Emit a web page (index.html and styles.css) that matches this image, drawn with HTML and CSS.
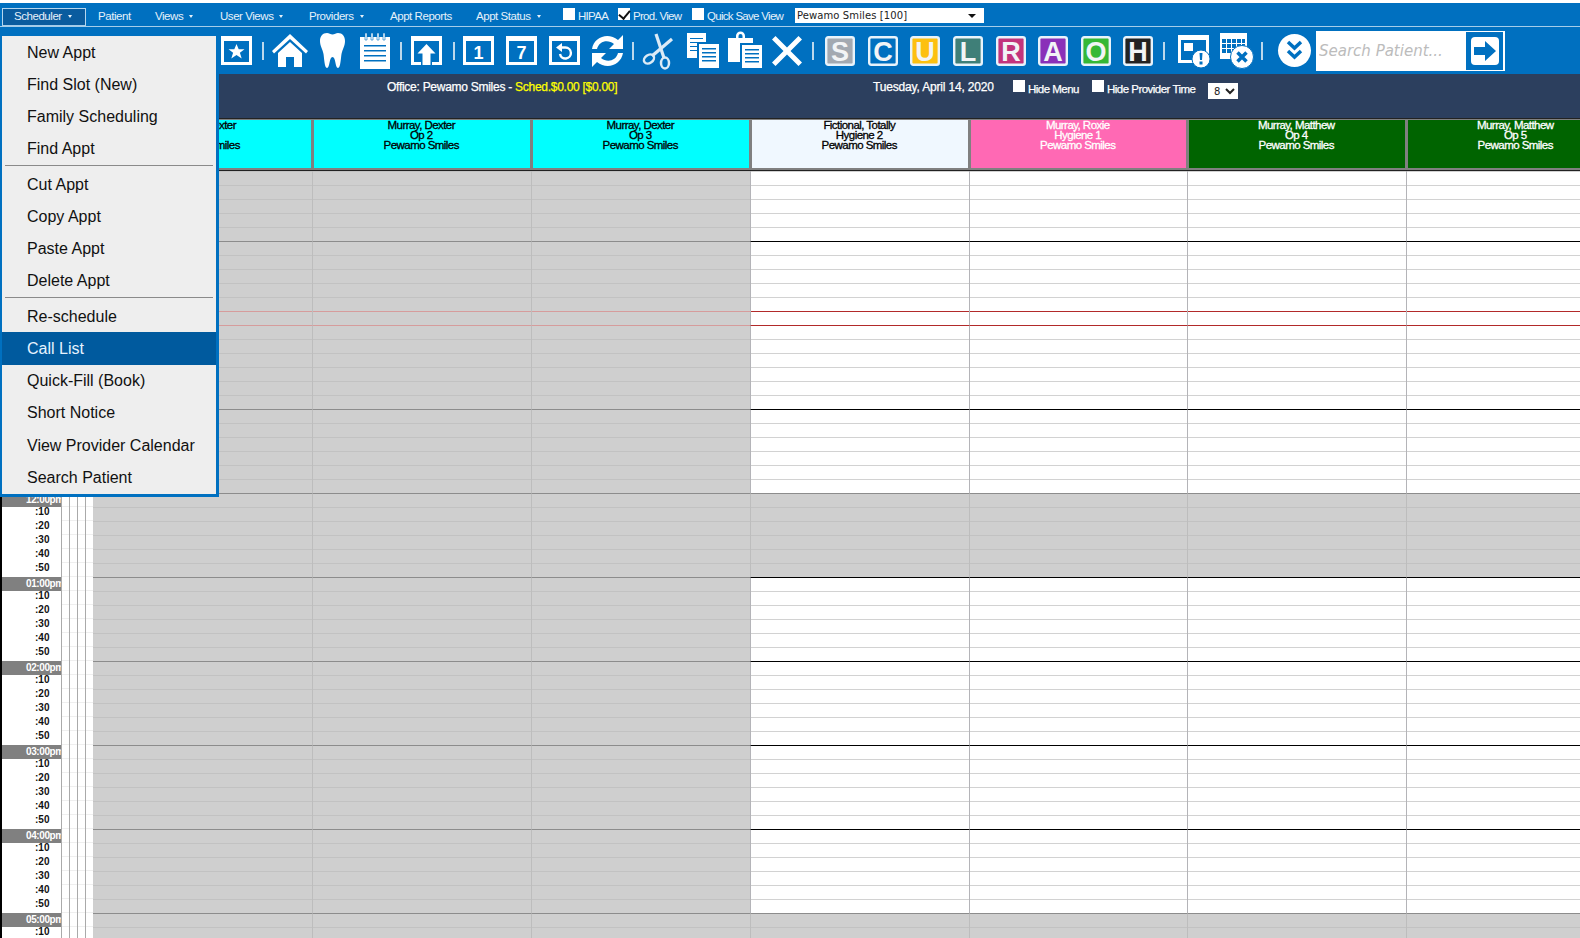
FILE: index.html
```html
<!DOCTYPE html>
<html lang="en">
<head>
<meta charset="utf-8">
<title>Scheduler</title>
<link rel="stylesheet" href="styles.css">
</head>
<body>
<div class="page">
  <nav class="nav">
    <a class="nav-item active caret">Scheduler</a>
    <a class="nav-item">Patient</a>
    <a class="nav-item caret">Views</a>
    <a class="nav-item caret">User Views</a>
    <a class="nav-item caret">Providers</a>
    <a class="nav-item">Appt Reports</a>
    <a class="nav-item caret">Appt Status</a>
    <label class="nav-check"><input type="checkbox">HIPAA</label>
    <label class="nav-check"><input type="checkbox" checked>Prod. View</label>
    <label class="nav-check"><input type="checkbox">Quick Save View</label>
    <span class="office-select"><select><option>Pewamo Smiles [100]</option></select></span>
  </nav>

  <div class="toolbar">
    <svg class="ic" width="31" height="29" viewBox="0 0 31 29"><path fill-rule="evenodd" d="M0 0h31v29H0zM3 5v21h25V5z"/><path d="M15.500 8l2.200 5.200h5.800l-4.600 3.600 1.800 5.700-5.200-3.500-5.200 3.500 1.800-5.700-4.600-3.600h5.800z"/></svg>
    <i class="sep"></i>
    <svg class="ic" width="36" height="33" viewBox="0 0 36 33"><path d="M18 0L36 17l-2 2.500L18 5 2 19.500 0 17z"/><path d="M18 8l12 11v14H22V23h-8v10H6V19z"/></svg>
    <svg class="ic" width="25" height="35" viewBox="0 0 25 35"><path d="M7 0c2 0 3.500 1.500 5.500 1.500S16 0 18 0c4.500 0 7 3.500 7 8 0 5-2.500 8-3.500 13-.7 4-1 14-3.500 14-3 0-2-11-5.500-11S10 35 7 35c-2.500 0-2.800-10-3.500-14C2.500 16 0 13 0 8c0-4.500 2.500-8 7-8z"/></svg>
    <svg class="ic" width="30" height="36" viewBox="0 0 30 36"><path fill-rule="evenodd" d="M0 4h30v32H0zM4 12v1.500h22V12zM4 17v1.500h22V17zM4 22v1.500h22V22zM4 27v1.500h22V27z"/><path d="M5 0h2v7H5zM11 0h2v7h-2zM17 0h2v7h-2zM23 0h2v7h-2z" stroke="#0070c0" stroke-width=".6"/></svg>
    <i class="sep"></i>
    <svg class="ic" width="31" height="29" viewBox="0 0 31 29"><path d="M0 0h31v29H21v-3h7V5H3v21h7v3H0z"/><path d="M15.500 8l9 9.500h-5V29h-8V17.500h-5z"/></svg>
    <i class="sep"></i>
    <svg class="ic" width="31" height="29" viewBox="0 0 31 29"><path fill-rule="evenodd" d="M0 0h31v29H0zM3 5v21h25V5z"/><text class="box-num" x="15.500" y="22.500">1</text></svg>
    <svg class="ic" width="31" height="29" viewBox="0 0 31 29"><path fill-rule="evenodd" d="M0 0h31v29H0zM3 5v21h25V5z"/><text class="box-num" x="15.500" y="22.500">7</text></svg>
    <svg class="ic" width="31" height="29" viewBox="0 0 31 29"><path fill-rule="evenodd" d="M0 0h31v29H0zM3 5v21h25V5z"/><path class="thin" d="M11 11.500h5.500a5.500 5.500 0 1 1-5.500 6.500" stroke-width="2.400"/><path d="M13 7v9l-6-4.500z"/></svg>
    <svg class="ic" width="31" height="34" viewBox="0 0 31 34"><path d="M31 1V15H17l5-5C16 5 7 7 5 15H0C2 3 16-2 26 6z"/><path d="M31 1V15H17l5-5C16 5 7 7 5 15H0C2 3 16-2 26 6z" transform="rotate(180 15.500 17)"/></svg>
    <i class="sep"></i>
    <svg class="ic" width="30" height="36" viewBox="0 0 30 36"><g class="soft"><path d="M13 1l8 24" stroke-width="3.200"/><path d="M29 6L9 23" stroke-width="3.200"/><ellipse cx="22" cy="30" rx="4" ry="5.500"/><ellipse cx="6" cy="26" rx="5.500" ry="4" transform="rotate(-35 6 26)"/></g></svg>
    <svg class="ic" width="32" height="35" viewBox="0 0 32 35"><path fill-rule="evenodd" d="M0 0h19v25H0zM3 5v1h13V5zM3 9v1h13V9zM3 13v1h13v-1zM3 17v1h13v-1z"/><rect x="10" y="9" width="22" height="26" fill="#0070c0"/><path fill-rule="evenodd" d="M12 11h20v24H12zM15 15v1.500h14V15zM15 19v1.500h14V19zM15 23v1.500h14V23zM15 27v1.500h14V27z"/></svg>
    <svg class="ic" width="34" height="35" viewBox="0 0 34 35"><path fill-rule="evenodd" d="M0 5h8V3a4 4 0 0 1 9 0v2h8v24H0zM10.500 3v2h4V3a2 2 0 0 0-4 0z"/><rect x="12" y="10" width="22" height="25" fill="#0070c0"/><path fill-rule="evenodd" d="M14 12h20v23H14zM17 16v1.500h14V16zM17 20v1.500h14V20zM17 24v1.500h14V24zM17 28v1.500h14V28z"/></svg>
    <svg class="ic" width="30" height="30" viewBox="0 0 30 30"><path d="M3.500 0L15 11.500 26.500 0 30 3.500 18.500 15 30 26.500 26.500 30 15 18.500 3.500 30 0 26.500 11.500 15 0 3.500z"/></svg>
    <i class="sep"></i>
    <svg class="letter" width="30" height="30" viewBox="0 0 30 30"><rect class="grey" x="1.200" y="1.200" width="27.600" height="27.600" rx="2"/><text x="15" y="24.500">S</text></svg>
    <svg class="letter" width="30" height="30" viewBox="0 0 30 30"><rect class="blue" x="1.200" y="1.200" width="27.600" height="27.600" rx="2"/><text x="15" y="24.500">C</text></svg>
    <svg class="letter" width="30" height="30" viewBox="0 0 30 30"><rect class="yellow" x="1.200" y="1.200" width="27.600" height="27.600" rx="2"/><text x="15" y="24.500">U</text></svg>
    <svg class="letter" width="30" height="30" viewBox="0 0 30 30"><rect class="teal" x="1.200" y="1.200" width="27.600" height="27.600" rx="2"/><text x="15" y="24.500">L</text></svg>
    <svg class="letter" width="30" height="30" viewBox="0 0 30 30"><rect class="rose" x="1.200" y="1.200" width="27.600" height="27.600" rx="2"/><text x="15" y="24.500">R</text></svg>
    <svg class="letter" width="30" height="30" viewBox="0 0 30 30"><rect class="violet" x="1.200" y="1.200" width="27.600" height="27.600" rx="2"/><text x="15" y="24.500">A</text></svg>
    <svg class="letter" width="30" height="30" viewBox="0 0 30 30"><rect class="green" x="1.200" y="1.200" width="27.600" height="27.600" rx="2"/><text x="15" y="24.500">O</text></svg>
    <svg class="letter" width="30" height="30" viewBox="0 0 30 30"><rect class="black" x="1.200" y="1.200" width="27.600" height="27.600" rx="2"/><text x="15" y="24.500">H</text></svg>
    <i class="sep"></i>
    <svg class="ic" width="32" height="34" viewBox="0 0 32 34"><path fill-rule="evenodd" d="M0 1h31v28H0zM3 6v20h25V6z"/><path d="M6 9h9v8H6z"/><circle cx="23" cy="25" r="9" stroke="#0070c0"/><path class="hole" d="M21.500 19h3l-.5 7h-2zM21.500 27.500h3v3h-3z"/></svg>
    <svg class="ic" width="34" height="36" viewBox="0 0 34 36"><path fill-rule="evenodd" d="M0 0h27v26H0zM2 6v4h4V6zM7 6v4h4V6zM12 6v4h4V6zM17 6v4h4V6zM22 6v4h3V6zM2 11v4h4v-4zM7 11v4h4v-4zM12 11v4h4v-4zM17 11v4h4v-4zM22 11v4h3v-4zM2 16v4h4v-4zM7 16v4h4v-4zM12 16v4h4v-4zM17 16v4h4v-4zM22 16v4h3v-4z"/><circle cx="22" cy="24" r="11.500" stroke="#0070c0"/><path class="hole-line" d="M17.500 19.500l9 9M26.500 19.500l-9 9"/></svg>
    <i class="sep"></i>
    <svg class="ic" width="33" height="33" viewBox="0 0 33 33"><circle cx="16.500" cy="16.500" r="16.500"/><path class="hole-line" d="M10 8l6.500 6L23 8M10 17l6.500 6 6.500-6"/></svg>
    <div class="search">
      <input type="text" placeholder="Search Patient...">
      <button type="button" aria-label="Go"><svg width="28" height="28" viewBox="0 0 28 28"><path d="M3 10h11V4l11 10-11 10v-6H3z"/></svg></button>
    </div>
  </div>

  <div class="status">
    <span class="office">Office: Pewamo Smiles - <em>Sched.$0.00 [$0.00]</em></span>
    <span class="date">Tuesday, April 14, 2020</span>
    <label class="status-check"><input type="checkbox">Hide Menu</label>
    <label class="status-check"><input type="checkbox">Hide Provider Time</label>
    <select class="hours"><option>8</option></select>
  </div>

  <div class="providers">
    <div class="spacer"></div>
    <div class="prov cyan">Murray, Dexter<br>Op 1<br>Pewamo Smiles</div>
    <div class="prov cyan">Murray, Dexter<br>Op 2<br>Pewamo Smiles</div>
    <div class="prov cyan">Murray, Dexter<br>Op 3<br>Pewamo Smiles</div>
    <div class="prov alice">Fictional, Totally<br>Hygiene 2<br>Pewamo Smiles</div>
    <div class="prov pink">Murray, Roxie<br>Hygiene 1<br>Pewamo Smiles</div>
    <div class="prov forest">Murray, Matthew<br>Op 4<br>Pewamo Smiles</div>
    <div class="prov forest">Murray, Matthew<br>Op 5<br>Pewamo Smiles</div>
  </div>

  <div class="grid">
    <div class="hour first">
      <div class="time"></div>
      <i class="n"></i><i class="n"></i><i class="n"></i><i class="n"></i>
      <div class="cell c"></div><div class="cell c"></div><div class="cell c"></div><div class="cell o"></div><div class="cell o"></div><div class="cell o"></div><div class="cell o"></div>
    </div>
    <div class="hour">
      <div class="time"></div>
      <i class="n"></i><i class="n"></i><i class="n"></i><i class="n"></i>
      <div class="cell c"></div><div class="cell c"></div><div class="cell c"></div><div class="cell o"></div><div class="cell o"></div><div class="cell o"></div><div class="cell o"></div>
    </div>
    <div class="hour now">
      <div class="time"></div>
      <i class="n"></i><i class="n"></i><i class="n"></i><i class="n"></i>
      <div class="cell c"></div><div class="cell c"></div><div class="cell c"></div><div class="cell o"></div><div class="cell o"></div><div class="cell o"></div><div class="cell o"></div>
    </div>
    <div class="hour">
      <div class="time"></div>
      <i class="n"></i><i class="n"></i><i class="n"></i><i class="n"></i>
      <div class="cell c"></div><div class="cell c"></div><div class="cell c"></div><div class="cell o"></div><div class="cell o"></div><div class="cell o"></div><div class="cell o"></div>
    </div>
    <div class="hour">
      <div class="time"><b>12:00pm</b><span>:10</span><span>:20</span><span>:30</span><span>:40</span><span>:50</span></div>
      <i class="n"></i><i class="n"></i><i class="n"></i><i class="n"></i>
      <div class="cell c"></div><div class="cell c"></div><div class="cell c"></div><div class="cell c"></div><div class="cell c"></div><div class="cell c"></div><div class="cell c"></div>
    </div>
    <div class="hour">
      <div class="time"><b>01:00pm</b><span>:10</span><span>:20</span><span>:30</span><span>:40</span><span>:50</span></div>
      <i class="n"></i><i class="n"></i><i class="n"></i><i class="n"></i>
      <div class="cell c"></div><div class="cell c"></div><div class="cell c"></div><div class="cell o"></div><div class="cell o"></div><div class="cell o"></div><div class="cell o"></div>
    </div>
    <div class="hour">
      <div class="time"><b>02:00pm</b><span>:10</span><span>:20</span><span>:30</span><span>:40</span><span>:50</span></div>
      <i class="n"></i><i class="n"></i><i class="n"></i><i class="n"></i>
      <div class="cell c"></div><div class="cell c"></div><div class="cell c"></div><div class="cell o"></div><div class="cell o"></div><div class="cell o"></div><div class="cell o"></div>
    </div>
    <div class="hour">
      <div class="time"><b>03:00pm</b><span>:10</span><span>:20</span><span>:30</span><span>:40</span><span>:50</span></div>
      <i class="n"></i><i class="n"></i><i class="n"></i><i class="n"></i>
      <div class="cell c"></div><div class="cell c"></div><div class="cell c"></div><div class="cell o"></div><div class="cell o"></div><div class="cell o"></div><div class="cell o"></div>
    </div>
    <div class="hour">
      <div class="time"><b>04:00pm</b><span>:10</span><span>:20</span><span>:30</span><span>:40</span><span>:50</span></div>
      <i class="n"></i><i class="n"></i><i class="n"></i><i class="n"></i>
      <div class="cell c"></div><div class="cell c"></div><div class="cell c"></div><div class="cell o"></div><div class="cell o"></div><div class="cell o"></div><div class="cell o"></div>
    </div>
    <div class="hour">
      <div class="time"><b>05:00pm</b><span>:10</span></div>
      <i class="n"></i><i class="n"></i><i class="n"></i><i class="n"></i>
      <div class="cell c"></div><div class="cell c"></div><div class="cell c"></div><div class="cell c"></div><div class="cell c"></div><div class="cell c"></div><div class="cell c"></div>
    </div>
  </div>

  <ul class="menu">
    <li>New Appt</li>
    <li>Find Slot (New)</li>
    <li>Family Scheduling</li>
    <li>Find Appt</li>
    <li class="rule"></li>
    <li>Cut Appt</li>
    <li>Copy Appt</li>
    <li>Paste Appt</li>
    <li>Delete Appt</li>
    <li class="rule"></li>
    <li>Re-schedule</li>
    <li class="hot">Call List</li>
    <li>Quick-Fill (Book)</li>
    <li>Short Notice</li>
    <li>View Provider Calendar</li>
    <li>Search Patient</li>
  </ul>
</div>
</body>
</html>
```

FILE: styles.css
```css
* { box-sizing: border-box; }
html, body { margin: 0; padding: 0; background: #fff; }
body { font-family: "Liberation Sans", Arial, sans-serif; }

.page {
  position: relative;
  width: 1580px;
  height: 938px;
  padding-top: 3px;
  overflow: hidden;
  background: #fff;
}

/* top navigation */
.nav {
  display: grid;
  grid-template-columns: 96px 57px 65px 89px 81px 86px 87px 55px 74px 103px 189px;
  align-items: center;
  height: 24px;
  padding: 2px 0 0 2px;
  background: #0070c0;
  border-bottom: 1px solid #a5cdea;
  font-size: 11.5px;
  letter-spacing: -.45px;
  color: #e6f1fa;
}
.nav-item { white-space: nowrap; }
.nav-item.caret::after {
  content: "";
  display: inline-block;
  margin-left: 6px;
  vertical-align: 2px;
  border-style: solid;
  border-width: 3px 2px 0;
  border-color: #e6f1fa transparent transparent;
}
.nav-item.active {
  align-self: end;
  width: 84px;
  height: 18px;
  padding-left: 11px;
  line-height: 14px;
  background: #0a5c9f;
  border: 1px solid #b5d6ee;
  border-bottom-color: #a5cdea;
}
.nav-check { display: flex; align-items: center; gap: 3px; white-space: nowrap; letter-spacing: -.7px; }
.nav-check input, .status-check input {
  appearance: none;
  flex: none;
  position: relative;
  width: 12px;
  height: 12px;
  margin: 0;
  background: #fff;
}
.nav-check input { top: -2px; }
.nav-check input:checked::after {
  content: "";
  position: absolute;
  left: 3px;
  top: 0;
  width: 5px;
  height: 9px;
  border: solid #111;
  border-width: 0 2px 2px 0;
  transform: rotate(40deg);
}
.office-select { position: relative; display: block; height: 15px; }
.office-select select {
  appearance: none;
  display: block;
  width: 189px;
  height: 15px;
  padding: 0 0 0 2px;
  border: 0;
  border-radius: 0;
  background: #fff;
  color: #222;
  font: 10px/15px "DejaVu Sans", Verdana, sans-serif;
  letter-spacing: .1px;
}
.office-select::after {
  content: "";
  position: absolute;
  right: 8px;
  top: 6px;
  border-style: solid;
  border-width: 4px 4px 0;
  border-color: #111 transparent transparent;
}

/* icon toolbar */
.toolbar {
  display: grid;
  grid-template-columns: 41px 10px 48px 40px 40px 11px 42px 10px 43px 43px 43px 40px 11px 44px 41px 44px 40px 13px 43px 42px 43px 43px 42px 43px 42px 40px 15px 42px 41px 17px 38px 189px;
  align-items: center;
  height: 47px;
  padding-left: 221px;
  background: #0070c0;
}
.ic { display: block; fill: #fff; overflow: visible; }
.sep { display: block; width: 2px; height: 18px; background: #bcd8ec; }
.box-num { font: bold 18px "Liberation Sans", sans-serif; text-anchor: middle; fill: #fff; }
.thin { fill: none; stroke: #fff; }
.soft { fill: none; stroke: #dcebf6; stroke-width: 2.5; }
.hole { fill: #0070c0; }
.hole-line { fill: none; stroke: #0070c0; stroke-width: 3.500; }
.letter { display: block; }
.letter rect { stroke: #e8f3fb; stroke-width: 2.400; }
.letter text { font: bold 27px "Liberation Sans", sans-serif; text-anchor: middle; fill: #f2f4f6; }
.grey { fill: #a3a9b1; }
.blue { fill: #0070c0; }
.yellow { fill: #fdc010; }
.teal { fill: #3f7f78; }
.rose { fill: #c2347c; }
.violet { fill: #8a30b8; }
.green { fill: #35b835; }
.black { fill: #222; }

.search {
  display: flex;
  align-items: center;
  justify-content: space-between;
  width: 189px;
  height: 40px;
  padding-right: 2px;
  background: #fff;
}
.search input {
  width: 148px;
  height: 30px;
  padding: 0 0 0 3px;
  border: 0;
  outline: 0;
  background: transparent;
  font: italic 15px "DejaVu Sans", Verdana, sans-serif;
}
.search input::placeholder { color: #bcbcbc; opacity: 1; }
.search button {
  display: flex;
  align-items: center;
  justify-content: center;
  width: 37px;
  height: 38px;
  padding: 0;
  border: 0;
  background: #0070c0;
}
.search button svg { background: #fff; border-radius: 4px; fill: #0070c0; }

/* office bar */
.status {
  display: grid;
  grid-template-columns: 486px 140px 79px 116px 30px;
  align-items: start;
  height: 44px;
  padding: 6px 0 0 387px;
  background: #2c3f5e;
  color: #fff;
  font-size: 12px;
  letter-spacing: -.5px;
  -webkit-text-stroke: .25px currentColor;
}
.office { letter-spacing: -.27px; }
.office em { font-style: normal; color: #ff0; }
.date { letter-spacing: -.17px; }
.status-check { display: flex; gap: 3px; white-space: nowrap; margin-top: -1px; line-height: 20px; font-size: 11.5px; letter-spacing: -.52px; }
.status-check input { margin-top: 1px; }
.hours {
  width: 30px;
  height: 16px;
  margin-top: 3px;
  padding: 0 0 0 2px;
  border: 0;
  border-radius: 0;
  background-color: #fff;
  color: #222;
  font: 10px "DejaVu Sans", sans-serif;
  -webkit-text-stroke: 0;
  letter-spacing: 0;
}

/* provider headers */
.providers {
  display: grid;
  grid-template-columns: 92px 219px 219px 219px 219px 218px 219px 219px;
  height: 53px;
  background: #222;
  padding: 1px 0;
}
.spacer { background: #2c3f5e; }
.prov {
  padding: 0 1.5px 0 0;
  border: solid #808080;
  border-width: 1px 0 2px 3px;
  text-align: center;
  font-size: 11.5px;
  line-height: 10px;
  letter-spacing: -.55px;
  -webkit-text-stroke: .3px currentColor;
}
.cyan { background: #0ff; color: #000; }
.alice { background: #f0f8ff; color: #000; }
.pink { background: #ff69b4; color: #fff; }
.forest { background: #006400; color: #fff; }

/* schedule grid */
.grid { height: 767px; overflow: hidden; }
.hour {
  display: grid;
  grid-template-columns: 61px 8px 8px 8px 8px 219px 219px 219px 219px 218px 219px 219px;
  height: 84px;
}
.hour.first { height: 70px; }
.time {
  display: flex;
  flex-direction: column;
  overflow: hidden;
  border-left: 2px solid #000;
  background: #fff;
  font-size: 10px;
  font-weight: bold;
  color: #111;
}
.time b {
  flex: none;
  height: 14px;
  padding-left: 24px;
  line-height: 14px;
  letter-spacing: -.4px;
  white-space: nowrap;
  background: #808080;
  color: #fff;
}
.time span {
  flex: none;
  height: 14px;
  padding-left: 33px;
  line-height: 10px;
}
.n {
  display: block;
  border-left: 1px solid #aaa;
  background: linear-gradient(to bottom, transparent 13px, #efefef 13px) 0 0 / 100% 14px;
}
.cell {
  position: relative;
  border-top: 1px solid #000;
  border-left: 1px solid #b4b4b8;
  background-image: linear-gradient(to bottom, transparent 13px, var(--line) 13px);
  background-size: 100% 14px;
}
.cell.o { --line: #d2d2d2; background-color: #fff; }
.cell.c { --line: #c2c2c2; background-color: #cfcfcf; border-top-color: #8c8c8c; border-left-color: #bdbdbd; }
.hour .n + .cell { border-left: 0; }
.first .cell { border-top: 0; background-position: 0 1px; }
.now .cell.o { border-top-color: #b22a2a; }
.now .cell.c { border-top-color: #d69c9c; }
.now .cell::before {
  content: "";
  position: absolute;
  left: 0;
  right: 0;
  top: -15px;
  height: 1px;
}
.now .cell.o::before { background: #b22a2a; }
.now .cell.c::before { background: #d69c9c; }

/* dropdown menu */
.menu {
  position: absolute;
  left: 0;
  top: 36px;
  width: 219px;
  margin: 0;
  padding: 0;
  list-style: none;
  background: #eee;
  border: solid #0070c0;
  border-width: 0 3px 3px 2px;
  font-size: 16px;
  color: #111;
}
.menu li {
  height: 32.25px;
  padding: .7px 0 0 25px;
  line-height: 32.25px;
  white-space: nowrap;
}
.menu li.rule {
  height: 3px;
  margin: 0 3px;
  padding: 0;
  border-top: 1px solid #8a8a8a;
}
.menu li.hot { background: #005a9e; color: #e6f3ff; }
```
